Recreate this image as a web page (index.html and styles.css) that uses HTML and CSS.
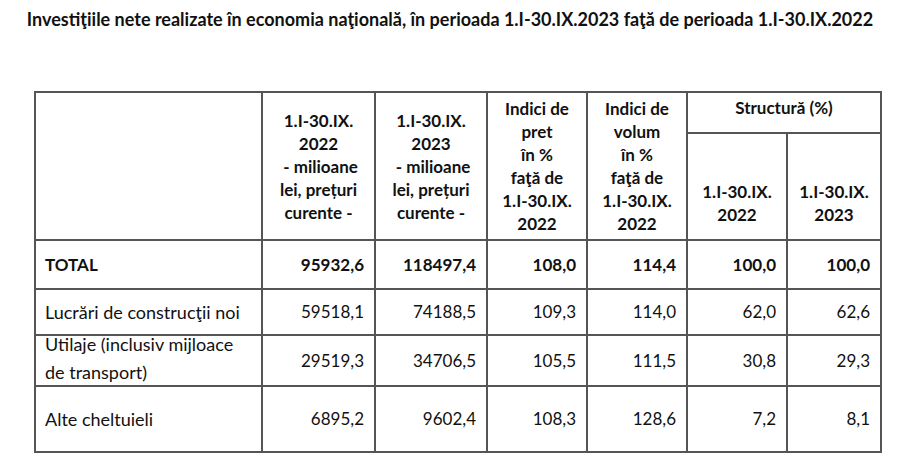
FILE: index.html
```html
<!DOCTYPE html>
<html lang="ro">
<head>
<meta charset="utf-8">
<title>Investiţiile nete</title>
<link rel="stylesheet" href="styles.css">
</head>
<body>
<h1 class="title">Investiţiile nete realizate în economia naţională, în perioada 1.I-30.IX.2023 faţă de perioada 1.I-30.IX.2022</h1>
<table class="data">
  <colgroup>
    <col class="c-label"><col class="c-val"><col class="c-val2"><col class="c-idx"><col class="c-idx"><col class="c-idx"><col class="c-last">
  </colgroup>
  <thead>
    <tr class="h1">
      <th rowspan="2"></th>
      <th rowspan="2" class="hc">1.I-30.IX.<br>2022<br>&nbsp;- milioane<br>lei, prețuri<br>curente -</th>
      <th rowspan="2" class="hc">1.I-30.IX.<br>2023<br>&nbsp;- milioane<br>lei, prețuri<br>curente -</th>
      <th rowspan="2" class="hi">Indici de<br>pret<br>în %<br>faţă de<br>1.I-30.IX.<br>2022</th>
      <th rowspan="2" class="hi">Indici de<br>volum<br>în %<br>faţă de<br>1.I-30.IX.<br>2022</th>
      <th colspan="2" class="hs">Structură (%)</th>
    </tr>
    <tr class="h2">
      <th class="hb">1.I-30.IX.<br>2022</th>
      <th class="hb">1.I-30.IX.<br>2023</th>
    </tr>
  </thead>
  <tbody>
    <tr class="r-total">
      <td class="lbl">TOTAL</td><td>95932,6</td><td>118497,4</td><td>108,0</td><td>114,4</td><td>100,0</td><td>100,0</td>
    </tr>
    <tr class="r-a">
      <td class="lbl">Lucrări de construcţii noi</td><td>59518,1</td><td>74188,5</td><td>109,3</td><td>114,0</td><td>62,0</td><td>62,6</td>
    </tr>
    <tr class="r-b">
      <td class="lbl lbl2"><div class="two-line">Utilaje (inclusiv mijloace<br>de transport)</div></td><td>29519,3</td><td>34706,5</td><td>105,5</td><td>111,5</td><td>30,8</td><td>29,3</td>
    </tr>
    <tr class="r-c">
      <td class="lbl">Alte cheltuieli</td><td>6895,2</td><td>9602,4</td><td>108,3</td><td>128,6</td><td>7,2</td><td>8,1</td>
    </tr>
  </tbody>
</table>
</body>
</html>
```

FILE: styles.css
```css
html, body {
  margin: 0;
  padding: 0;
  background: #ffffff;
  color: #111111;
  font-family: Lato, "Liberation Sans", sans-serif;
}

.title {
  margin: 0;
  padding-top: 9px;
  text-align: center;
  font-size: 18px;
  font-weight: 700;
  line-height: 20px;
  white-space: nowrap;
}

.data {
  margin: 62px 0 0 34px;
  border-collapse: collapse;
  table-layout: fixed;
  width: 848px;
  font-size: 17px;
  border: 2px solid #666666;
}

.c-label { width: 227px; }
.c-val { width: 113px; }
.c-val2 { width: 112px; }
.c-idx { width: 100px; }
.c-last { width: 94px; }

.data th,
.data td {
  border: 2px solid #555555;
  padding: 0;
}

.data th {
  font-weight: 700;
  text-align: center;
  line-height: 23px;
}

.h1 { height: 41px; }
.h2 { height: 107px; }

.data .hc { vertical-align: middle; }
.data .hi { vertical-align: middle; }
.data .hs { vertical-align: top; padding-top: 3px; }
.data .hb { vertical-align: bottom; padding-bottom: 13px; }

.data td {
  text-align: right;
  padding-right: 10px;
  vertical-align: middle;
  line-height: 24px;
}

.data td.lbl {
  text-align: left;
  padding-left: 9px;
  padding-right: 0;
  font-size: 18px;
}

.data .r-total td.lbl { font-size: 17px; }

.two-line {
  line-height: 28px;
  margin: -6px 0 -1px;
}

.r-total td { font-weight: 700; }
.r-total { height: 49px; }
.r-a { height: 46px; }
.r-b { height: 49px; }
.r-c { height: 66px; }
```
